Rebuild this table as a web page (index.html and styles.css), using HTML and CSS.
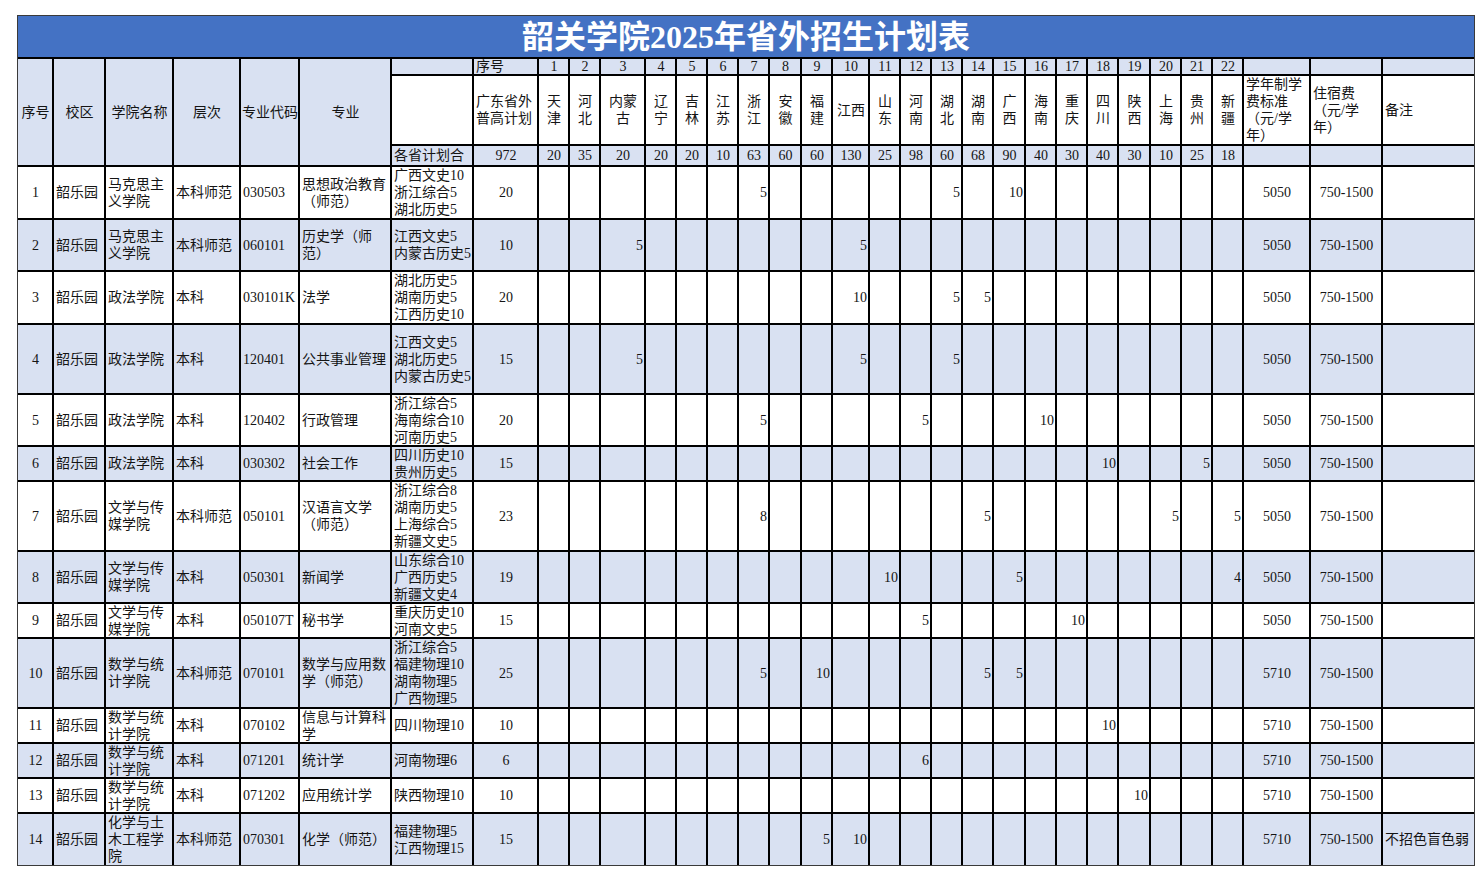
FILE: index.html
```html
<!DOCTYPE html>
<html lang="zh-CN">
<head>
<meta charset="utf-8">
<title>韶关学院2025年省外招生计划表</title>
<link rel="stylesheet" href="styles.css">
</head>
<body>
<div class="sheet">
  <div class="title">韶关学院2025年省外招生计划表</div>
  <div class="grid">
    <div class="hd c span3">序号</div>
    <div class="hd c span3">校区</div>
    <div class="hd c span3">学院名称</div>
    <div class="hd c span3">层次</div>
    <div class="hd c span3">专业代码</div>
    <div class="hd c span3">专业</div>
    <div class="hd"></div>
    <div class="hd l">序号</div>
    <div class="hd c">1</div><div class="hd c">2</div><div class="hd c">3</div><div class="hd c">4</div><div class="hd c">5</div><div class="hd c">6</div><div class="hd c">7</div><div class="hd c">8</div><div class="hd c">9</div><div class="hd c">10</div><div class="hd c">11</div><div class="hd c">12</div><div class="hd c">13</div><div class="hd c">14</div><div class="hd c">15</div><div class="hd c">16</div><div class="hd c">17</div><div class="hd c">18</div><div class="hd c">19</div><div class="hd c">20</div><div class="hd c">21</div><div class="hd c">22</div>
    <div class="hd"></div><div class="hd"></div><div class="hd"></div>

    <div class="hw"></div>
    <div class="hw l"><span>广东省外<br>普高计划</span></div>
    <div class="hw c"><span>天<br>津</span></div>
    <div class="hw c"><span>河<br>北</span></div>
    <div class="hw c"><span>内蒙<br>古</span></div>
    <div class="hw c"><span>辽<br>宁</span></div>
    <div class="hw c"><span>吉<br>林</span></div>
    <div class="hw c"><span>江<br>苏</span></div>
    <div class="hw c"><span>浙<br>江</span></div>
    <div class="hw c"><span>安<br>徽</span></div>
    <div class="hw c"><span>福<br>建</span></div>
    <div class="hw c">江西</div>
    <div class="hw c"><span>山<br>东</span></div>
    <div class="hw c"><span>河<br>南</span></div>
    <div class="hw c"><span>湖<br>北</span></div>
    <div class="hw c"><span>湖<br>南</span></div>
    <div class="hw c"><span>广<br>西</span></div>
    <div class="hw c"><span>海<br>南</span></div>
    <div class="hw c"><span>重<br>庆</span></div>
    <div class="hw c"><span>四<br>川</span></div>
    <div class="hw c"><span>陕<br>西</span></div>
    <div class="hw c"><span>上<br>海</span></div>
    <div class="hw c"><span>贵<br>州</span></div>
    <div class="hw c"><span>新<br>疆</span></div>
    <div class="hw l"><span>学年制学<br>费标准<br>（元/学<br>年）</span></div>
    <div class="hw l"><span>住宿费<br>（元/学<br>年）</span></div>
    <div class="hw l">备注</div>

    <div class="hd l">各省计划合</div>
    <div class="hd c">972</div>
    <div class="hd c">20</div><div class="hd c">35</div><div class="hd c">20</div><div class="hd c">20</div><div class="hd c">20</div><div class="hd c">10</div><div class="hd c">63</div><div class="hd c">60</div><div class="hd c">60</div><div class="hd c">130</div><div class="hd c">25</div><div class="hd c">98</div><div class="hd c">60</div><div class="hd c">68</div><div class="hd c">90</div><div class="hd c">40</div><div class="hd c">30</div><div class="hd c">40</div><div class="hd c">30</div><div class="hd c">10</div><div class="hd c">25</div><div class="hd c">18</div>
    <div class="hd"></div><div class="hd"></div><div class="hd"></div>

    <div class="row">
      <div class="c">1</div><div class="l">韶乐园</div><div class="l"><span>马克思主<br>义学院</span></div><div class="l">本科师范</div><div class="l">030503</div><div class="l"><span>思想政治教育<br>（师范）</span></div><div class="l"><span>广西文史10<br>浙江综合5<br>湖北历史5</span></div><div class="c">20</div>
      <div></div><div></div><div></div><div></div><div></div><div></div><div>5</div><div></div><div></div><div></div><div></div><div></div><div>5</div><div></div><div>10</div><div></div><div></div><div></div><div></div><div></div><div></div><div></div>
      <div class="c">5050</div><div class="c">750-1500</div><div class="l"></div>
    </div>
    <div class="row alt">
      <div class="c">2</div><div class="l">韶乐园</div><div class="l"><span>马克思主<br>义学院</span></div><div class="l">本科师范</div><div class="l">060101</div><div class="l"><span>历史学（师<br>范）</span></div><div class="l"><span>江西文史5<br>内蒙古历史5</span></div><div class="c">10</div>
      <div></div><div></div><div>5</div><div></div><div></div><div></div><div></div><div></div><div></div><div>5</div><div></div><div></div><div></div><div></div><div></div><div></div><div></div><div></div><div></div><div></div><div></div><div></div>
      <div class="c">5050</div><div class="c">750-1500</div><div class="l"></div>
    </div>
    <div class="row">
      <div class="c">3</div><div class="l">韶乐园</div><div class="l">政法学院</div><div class="l">本科</div><div class="l">030101K</div><div class="l">法学</div><div class="l"><span>湖北历史5<br>湖南历史5<br>江西历史10</span></div><div class="c">20</div>
      <div></div><div></div><div></div><div></div><div></div><div></div><div></div><div></div><div></div><div>10</div><div></div><div></div><div>5</div><div>5</div><div></div><div></div><div></div><div></div><div></div><div></div><div></div><div></div>
      <div class="c">5050</div><div class="c">750-1500</div><div class="l"></div>
    </div>
    <div class="row alt">
      <div class="c">4</div><div class="l">韶乐园</div><div class="l">政法学院</div><div class="l">本科</div><div class="l">120401</div><div class="l">公共事业管理</div><div class="l"><span>江西文史5<br>湖北历史5<br>内蒙古历史5</span></div><div class="c">15</div>
      <div></div><div></div><div>5</div><div></div><div></div><div></div><div></div><div></div><div></div><div>5</div><div></div><div></div><div>5</div><div></div><div></div><div></div><div></div><div></div><div></div><div></div><div></div><div></div>
      <div class="c">5050</div><div class="c">750-1500</div><div class="l"></div>
    </div>
    <div class="row">
      <div class="c">5</div><div class="l">韶乐园</div><div class="l">政法学院</div><div class="l">本科</div><div class="l">120402</div><div class="l">行政管理</div><div class="l"><span>浙江综合5<br>海南综合10<br>河南历史5</span></div><div class="c">20</div>
      <div></div><div></div><div></div><div></div><div></div><div></div><div>5</div><div></div><div></div><div></div><div></div><div>5</div><div></div><div></div><div></div><div>10</div><div></div><div></div><div></div><div></div><div></div><div></div>
      <div class="c">5050</div><div class="c">750-1500</div><div class="l"></div>
    </div>
    <div class="row alt">
      <div class="c">6</div><div class="l">韶乐园</div><div class="l">政法学院</div><div class="l">本科</div><div class="l">030302</div><div class="l">社会工作</div><div class="l"><span>四川历史10<br>贵州历史5</span></div><div class="c">15</div>
      <div></div><div></div><div></div><div></div><div></div><div></div><div></div><div></div><div></div><div></div><div></div><div></div><div></div><div></div><div></div><div></div><div></div><div>10</div><div></div><div></div><div>5</div><div></div>
      <div class="c">5050</div><div class="c">750-1500</div><div class="l"></div>
    </div>
    <div class="row">
      <div class="c">7</div><div class="l">韶乐园</div><div class="l"><span>文学与传<br>媒学院</span></div><div class="l">本科师范</div><div class="l">050101</div><div class="l"><span>汉语言文学<br>（师范）</span></div><div class="l"><span>浙江综合8<br>湖南历史5<br>上海综合5<br>新疆文史5</span></div><div class="c">23</div>
      <div></div><div></div><div></div><div></div><div></div><div></div><div>8</div><div></div><div></div><div></div><div></div><div></div><div></div><div>5</div><div></div><div></div><div></div><div></div><div></div><div>5</div><div></div><div>5</div>
      <div class="c">5050</div><div class="c">750-1500</div><div class="l"></div>
    </div>
    <div class="row alt">
      <div class="c">8</div><div class="l">韶乐园</div><div class="l"><span>文学与传<br>媒学院</span></div><div class="l">本科</div><div class="l">050301</div><div class="l">新闻学</div><div class="l"><span>山东综合10<br>广西历史5<br>新疆文史4</span></div><div class="c">19</div>
      <div></div><div></div><div></div><div></div><div></div><div></div><div></div><div></div><div></div><div></div><div>10</div><div></div><div></div><div></div><div>5</div><div></div><div></div><div></div><div></div><div></div><div></div><div>4</div>
      <div class="c">5050</div><div class="c">750-1500</div><div class="l"></div>
    </div>
    <div class="row">
      <div class="c">9</div><div class="l">韶乐园</div><div class="l"><span>文学与传<br>媒学院</span></div><div class="l">本科</div><div class="l">050107T</div><div class="l">秘书学</div><div class="l"><span>重庆历史10<br>河南文史5</span></div><div class="c">15</div>
      <div></div><div></div><div></div><div></div><div></div><div></div><div></div><div></div><div></div><div></div><div></div><div>5</div><div></div><div></div><div></div><div></div><div>10</div><div></div><div></div><div></div><div></div><div></div>
      <div class="c">5050</div><div class="c">750-1500</div><div class="l"></div>
    </div>
    <div class="row alt">
      <div class="c">10</div><div class="l">韶乐园</div><div class="l"><span>数学与统<br>计学院</span></div><div class="l">本科师范</div><div class="l">070101</div><div class="l"><span>数学与应用数<br>学（师范）</span></div><div class="l"><span>浙江综合5<br>福建物理10<br>湖南物理5<br>广西物理5</span></div><div class="c">25</div>
      <div></div><div></div><div></div><div></div><div></div><div></div><div>5</div><div></div><div>10</div><div></div><div></div><div></div><div></div><div>5</div><div>5</div><div></div><div></div><div></div><div></div><div></div><div></div><div></div>
      <div class="c">5710</div><div class="c">750-1500</div><div class="l"></div>
    </div>
    <div class="row">
      <div class="c">11</div><div class="l">韶乐园</div><div class="l"><span>数学与统<br>计学院</span></div><div class="l">本科</div><div class="l">070102</div><div class="l"><span>信息与计算科<br>学</span></div><div class="l">四川物理10</div><div class="c">10</div>
      <div></div><div></div><div></div><div></div><div></div><div></div><div></div><div></div><div></div><div></div><div></div><div></div><div></div><div></div><div></div><div></div><div></div><div>10</div><div></div><div></div><div></div><div></div>
      <div class="c">5710</div><div class="c">750-1500</div><div class="l"></div>
    </div>
    <div class="row alt">
      <div class="c">12</div><div class="l">韶乐园</div><div class="l"><span>数学与统<br>计学院</span></div><div class="l">本科</div><div class="l">071201</div><div class="l">统计学</div><div class="l">河南物理6</div><div class="c">6</div>
      <div></div><div></div><div></div><div></div><div></div><div></div><div></div><div></div><div></div><div></div><div></div><div>6</div><div></div><div></div><div></div><div></div><div></div><div></div><div></div><div></div><div></div><div></div>
      <div class="c">5710</div><div class="c">750-1500</div><div class="l"></div>
    </div>
    <div class="row">
      <div class="c">13</div><div class="l">韶乐园</div><div class="l"><span>数学与统<br>计学院</span></div><div class="l">本科</div><div class="l">071202</div><div class="l">应用统计学</div><div class="l">陕西物理10</div><div class="c">10</div>
      <div></div><div></div><div></div><div></div><div></div><div></div><div></div><div></div><div></div><div></div><div></div><div></div><div></div><div></div><div></div><div></div><div></div><div></div><div>10</div><div></div><div></div><div></div>
      <div class="c">5710</div><div class="c">750-1500</div><div class="l"></div>
    </div>
    <div class="row alt">
      <div class="c">14</div><div class="l">韶乐园</div><div class="l"><span>化学与土<br>木工程学<br>院</span></div><div class="l">本科师范</div><div class="l">070301</div><div class="l">化学（师范）</div><div class="l"><span>福建物理5<br>江西物理15</span></div><div class="c">15</div>
      <div></div><div></div><div></div><div></div><div></div><div></div><div></div><div></div><div>5</div><div>10</div><div></div><div></div><div></div><div></div><div></div><div></div><div></div><div></div><div></div><div></div><div></div><div></div>
      <div class="c">5710</div><div class="c">750-1500</div><div class="l">不招色盲色弱</div>
    </div>
  </div>
</div>
</body>
</html>
```

FILE: styles.css
```css
html, body {
  margin: 0;
  padding: 0;
  background: #ffffff;
}

body {
  font-family: "Liberation Serif", "Noto Sans CJK SC", serif;
  font-size: 14px;
  color: #141414;
}

.sheet {
  width: 1456px;
  margin: 15px 0 0 17px;
  border: 1px solid #3a3a3a;
}

.title {
  height: 41px;
  background: #4472c4;
  border-bottom: 2px solid #000;
  color: #ffffff;
  font-size: 32px;
  font-weight: bold;
  line-height: 43px;
  text-align: center;
  white-space: nowrap;
}

.grid {
  display: grid;
  grid-template-columns:
    34px 50px 66px 65px 57px 90px 80px 63px
    29px 29px 43px 29px 29px 29px 29px 30px 29px 35px 29px
    29px 29px 29px 30px 29px 29px 29px 30px 29px 29px 29px
    65px 70px 91px;
  grid-template-rows:
    15px 68px 19px
    51px 50px 51px 68px 50px 33px 68px 50px 33px 68px 33px 33px 33px 51px;
  gap: 2px;
  background: #000;
}

.grid > div,
.row > div {
  display: flex;
  align-items: center;
  justify-content: flex-end;
  text-align: right;
  padding: 0 1px 0 2px;
  line-height: 17px;
  white-space: nowrap;
  background: #ffffff;
  min-width: 0;
}

.grid > .row {
  display: contents;
}

.grid > .hd {
  background: #d9e1f2;
}

.grid > .hw {
  background: #ffffff;
}

.row.alt > div {
  background: #d9e1f2;
}

.grid .l {
  justify-content: flex-start;
  text-align: left;
}

.grid .c {
  justify-content: center;
  text-align: center;
}

.grid .span3 {
  grid-row: span 3;
}
```
